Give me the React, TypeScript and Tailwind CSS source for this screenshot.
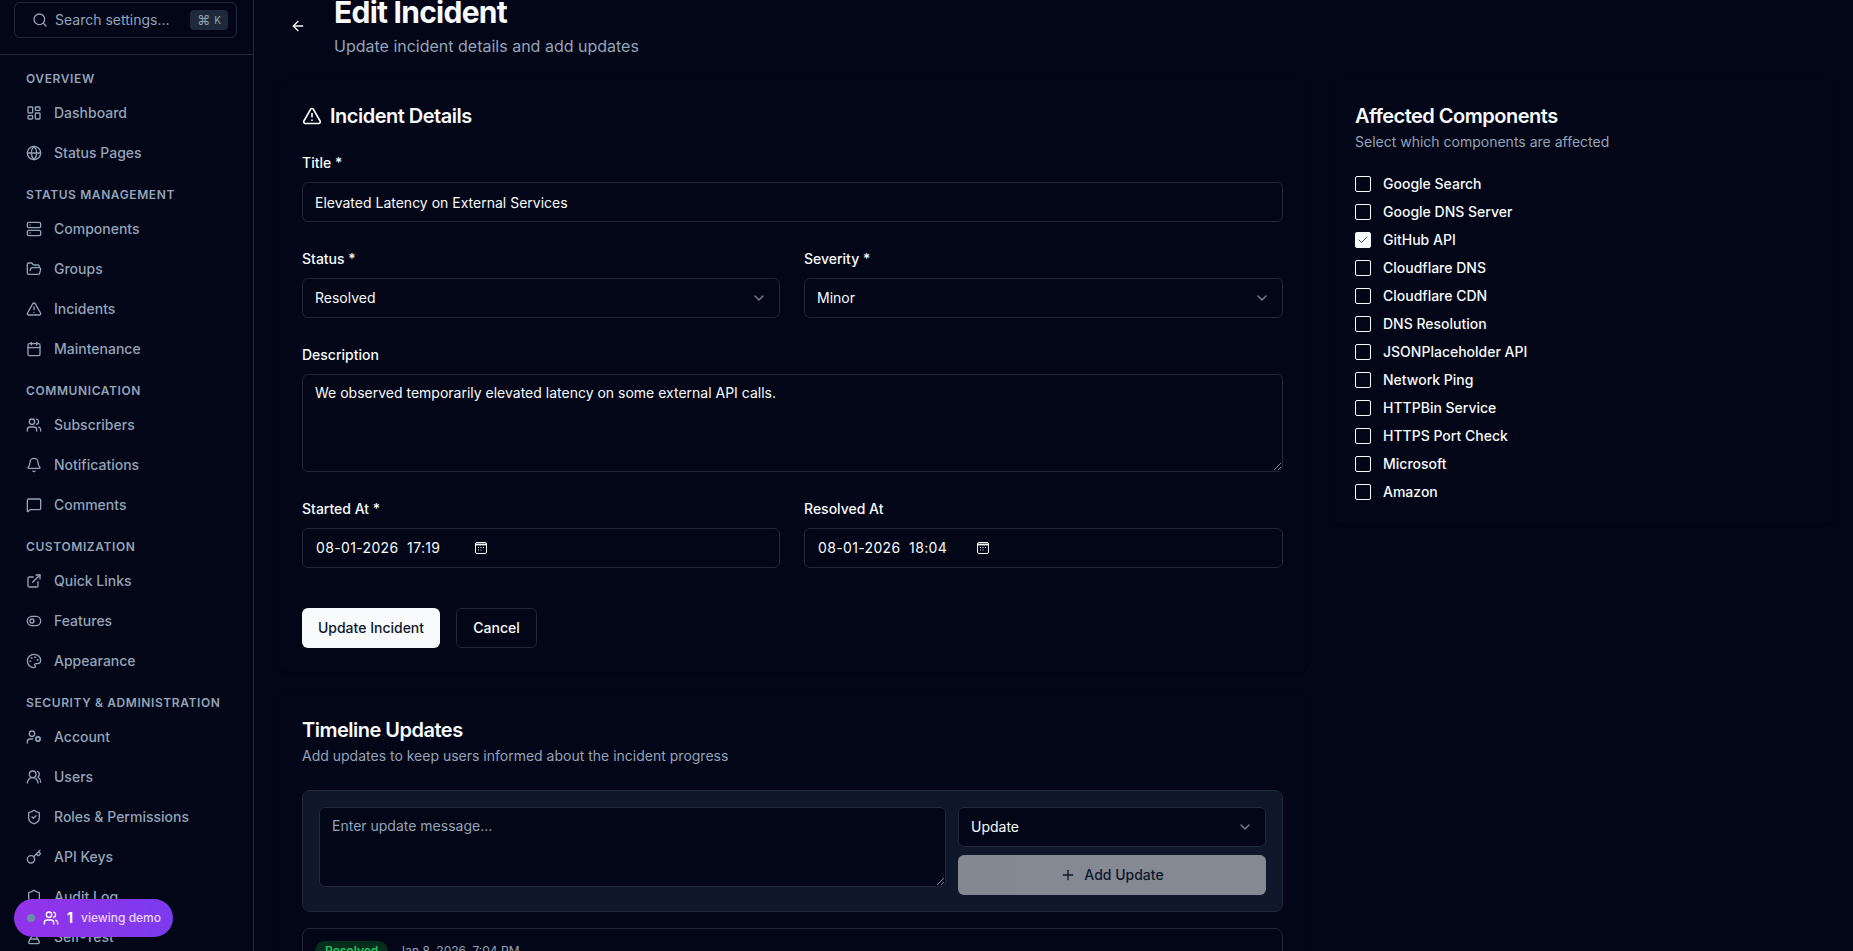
import React from "react";
import {
  LayoutDashboard, Globe, Server, FolderOpen, TriangleAlert, Calendar, Users, Bell, MessageSquare,
  ExternalLink, ToggleLeft, Palette, UserCog, UsersRound, ShieldCheck, Key, Shield, FlaskConical,
  Search, ArrowLeft, ChevronDown, Plus, Check,
} from "lucide-react";

const font = { fontFamily: "Inter, 'Liberation Sans', sans-serif" };

const nav: { title: string; items: [any, string][] }[] = [
  { title: "Overview", items: [[LayoutDashboard, "Dashboard"], [Globe, "Status Pages"]] },
  { title: "Status Management", items: [[Server, "Components"], [FolderOpen, "Groups"], [TriangleAlert, "Incidents"], [Calendar, "Maintenance"]] },
  { title: "Communication", items: [[Users, "Subscribers"], [Bell, "Notifications"], [MessageSquare, "Comments"]] },
  { title: "Customization", items: [[ExternalLink, "Quick Links"], [ToggleLeft, "Features"], [Palette, "Appearance"]] },
  { title: "Security & Administration", items: [[UserCog, "Account"], [UsersRound, "Users"], [ShieldCheck, "Roles & Permissions"], [Key, "API Keys"], [Shield, "Audit Log"], [FlaskConical, "Self-Test"]] },
];

const comps = ["Google Search", "Google DNS Server", "GitHub API", "Cloudflare DNS", "Cloudflare CDN", "DNS Resolution", "JSONPlaceholder API", "Network Ping", "HTTPBin Service", "HTTPS Port Check", "Microsoft", "Amazon"];

function Field({ label, children }: { label: string; children: React.ReactNode }) {
  return (
    <div className="flex flex-col gap-[9px]">
      <div className="text-sm leading-5 font-medium text-[#f8fafc]">{label}</div>
      {children}
    </div>
  );
}

function Box({ children, className = "" }: { children: React.ReactNode; className?: string }) {
  return <div className={"h-10 rounded-md border border-[#1e293b] bg-[#020617] flex items-center px-3 text-sm text-[#f8fafc] " + className}>{children}</div>;
}

function SelectBox({ value }: { value: string }) {
  return (
    <Box className="justify-between">
      <span>{value}</span>
      <ChevronDown className="w-4 h-4 text-[#f8fafc] opacity-50" />
    </Box>
  );
}

function DateBox({ value, gap }: { value: string; gap: string }) {
  return (
    <Box>
      <span className={"tracking-[0.35px] pl-[1px] whitespace-pre " + gap}>{value}</span>
      <svg viewBox="0 0 14 14" className="w-[14px] h-[14px] text-[#f8fafc]" fill="none" stroke="currentColor" strokeWidth="1">
        <rect x="1.5" y="1.5" width="11" height="11" rx="1.5" />
        <path d="M1.5 3.5h11" strokeWidth="1.8" />
        <path d="M4 6.5h1M6.5 6.5h1M9 6.5h1M4 9h1M6.5 9h1" />
      </svg>
    </Box>
  );
}

function Resize() {
  return (
    <svg viewBox="0 0 8 8" className="absolute right-[1px] bottom-[1px] w-2 h-2 text-[#94a3b8]" stroke="currentColor" strokeWidth="0.8">
      <path d="M1 8 8 1M5 8l3-3" />
    </svg>
  );
}

export default function App() {
  return (
    <div style={font} className="h-screen overflow-hidden flex bg-[#020617] text-[#f8fafc]">
      <aside className="w-[254px] shrink-0 border-r border-[#1e293b] h-full overflow-hidden flex flex-col">
        <div className="h-[55px] shrink-0 border-b border-[#1e293b] px-[14px] pt-[2px]">
          <div className="h-[36px] w-[223px] rounded-md border border-[#1e293b] flex items-center pl-[17px] pr-[8px]">
            <Search className="w-4 h-4 text-[#94a3b8] mr-[7px]" />
            <span className="text-sm text-[#94a3b8] flex-1">Search settings...</span>
            <span className="h-5 w-[38px] rounded bg-[#1e293b] flex items-center justify-center gap-[4px] text-[#94a3b8] text-xs leading-none">
              <span className="text-[13px]">⌘</span><span className="text-[10px]">K</span>
            </span>
          </div>
        </div>
        <nav className="px-[26px] pt-[15px] flex flex-col gap-[13px]">
          {nav.map((s) => (
            <div key={s.title}>
              <div className="text-xs leading-[18px] font-semibold uppercase tracking-[0.6px] text-[#94a3b8] h-[18px] mb-[5px]">{s.title}</div>
              <div className="flex flex-col">
                {s.items.map(([I, t]) => (
                  <div key={t} className="h-10 flex items-center gap-[12px] text-sm font-medium text-[#94a3b8]">
                    <I className="w-4 h-4 shrink-0" strokeWidth={2} />
                    <span>{t}</span>
                  </div>
                ))}
              </div>
            </div>
          ))}
        </nav>
      </aside>

      <main className="flex-1 min-w-0 pl-6 pr-[18px] -mt-[6px]">
        <div className="flex items-start pl-[12px] mb-[22px]">
          <ArrowLeft className="w-4 h-4 mt-[24px] mr-[28px] text-[#f8fafc]" />
          <div>
            <h1 className="text-3xl leading-9 font-bold tracking-[-0.75px] text-[#f8fafc]">Edit Incident</h1>
            <p className="text-base leading-6 text-[#94a3b8] mt-[4px]">Update incident details and add updates</p>
          </div>
        </div>

        <div className="grid grid-cols-[1029px_1fr] gap-6 items-start">
          <div className="flex flex-col gap-[22px]">
            <section className="rounded-lg p-6 bg-[#020617] shadow-sm">
              <div className="flex items-center gap-2 h-6">
                <TriangleAlert className="w-5 h-5" />
                <h2 className="text-xl leading-6 font-semibold tracking-[-0.5px]">Incident Details</h2>
              </div>
              <div className="mt-[25px] flex flex-col gap-[27px]">
                <Field label="Title *"><Box className="pt-px">Elevated Latency on External Services</Box></Field>
                <div className="grid grid-cols-[478px_479px] gap-6">
                  <Field label="Status *"><SelectBox value="Resolved" /></Field>
                  <Field label="Severity *"><SelectBox value="Minor" /></Field>
                </div>
                <Field label="Description">
                  <div className="relative h-[98px] rounded-md border border-[#1e293b] px-3 py-2 text-sm leading-5">
                    We observed temporarily elevated latency on some external API calls.
                    <Resize />
                  </div>
                </Field>
                <div className="grid grid-cols-[478px_479px] gap-6">
                  <Field label="Started At *"><DateBox value="08-01-2026  17:19" gap="mr-[34px]" /></Field>
                  <Field label="Resolved At"><DateBox value="08-01-2026  18:04" gap="mr-[29px]" /></Field>
                </div>
              </div>
              <div className="mt-[40px] flex gap-4">
                <div className="h-10 w-[138px] rounded-md bg-[#f8fafc] text-[#0f172a] text-sm font-medium flex items-center justify-center">Update Incident</div>
                <div className="h-10 w-[81px] rounded-md border border-[#1e293b] text-sm font-medium flex items-center justify-center">Cancel</div>
              </div>
            </section>

            <section className="rounded-lg p-6 bg-[#020617] shadow-sm">
              <h2 className="text-xl leading-6 font-semibold tracking-[-0.5px]">Timeline Updates</h2>
              <p className="text-sm leading-5 text-[#94a3b8] mt-[4px]">Add updates to keep users informed about the incident progress</p>
              <div className="mt-[24px] rounded-lg border border-[#1e293b] bg-[#0f172a] p-4 flex gap-3 h-[122px]">
                <div className="relative flex-1 h-[80px] rounded-md border border-[#1e293b] bg-[#020617] px-3 py-2 text-sm leading-5 text-[#94a3b8]">
                  Enter update message...
                  <Resize />
                </div>
                <div className="w-[308px] flex flex-col gap-2">
                  <SelectBox value="Update" />
                  <div className="h-10 rounded-md bg-[#f8fafc] opacity-50 text-[#0f172a] text-sm font-medium flex items-center justify-center gap-2">
                    <Plus className="w-4 h-4" />Add Update
                  </div>
                </div>
              </div>
              <div className="mt-[16px] rounded-lg border border-[#1e293b] p-3 h-24">
                <div className="flex items-center gap-[10px]">
                  <span className="rounded-full bg-[#052e1c] text-[#22c55e] text-xs font-semibold px-[10px] py-[2px]">Resolved</span>
                  <span className="text-xs text-[#94a3b8]">Jan 8, 2026, 7:04 PM</span>
                </div>
              </div>
            </section>
          </div>

          <section className="rounded-lg p-6 bg-[#020617] shadow-sm">
            <h2 className="text-xl leading-6 font-semibold tracking-[-0.5px]">Affected Components</h2>
            <p className="text-sm leading-5 text-[#94a3b8] mt-[4px]">Select which components are affected</p>
            <div className="mt-[24px] flex flex-col gap-[12px]">
              {comps.map((c) => (
                <div key={c} className="flex items-center gap-[12px] h-4">
                  {c === "GitHub API" ? (
                    <span className="w-4 h-4 rounded-[2px] bg-[#f8fafc] border border-[#f8fafc] flex items-center justify-center text-[#0f172a]"><Check className="w-3 h-3" strokeWidth={1.5} /></span>
                  ) : (
                    <span className="w-4 h-4 rounded-[2px] border border-[#f8fafc]" />
                  )}
                  <span className="text-sm font-medium">{c}</span>
                </div>
              ))}
            </div>
          </section>
        </div>
      </main>

      <div className="fixed left-[14px] bottom-[14px] h-[38px] w-[159px] rounded-full bg-gradient-to-r from-[#9333ea] to-[#7c3aed] flex items-center pl-[13px] text-white">
        <span className="w-2 h-2 rounded-full bg-[#6b8fa8]" />
        <Users className="w-4 h-4 ml-[8px]" />
        <span className="text-sm font-bold ml-[8px]">1</span>
        <span className="text-xs font-medium text-[#e9d5ff] ml-[8px]">viewing demo</span>
      </div>
    </div>
  );
}
